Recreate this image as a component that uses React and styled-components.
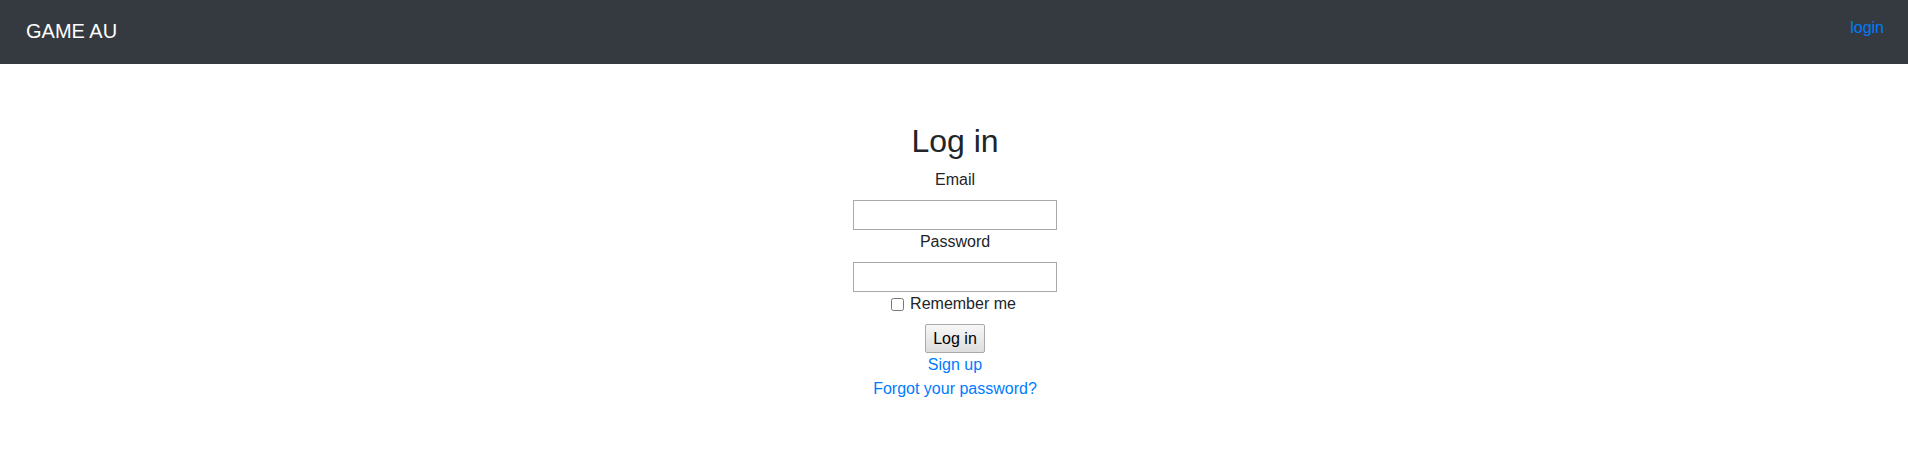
import React from "react";
import styled, { createGlobalStyle } from "styled-components";

const GlobalStyle = createGlobalStyle`
  body {
    margin: 0;
    font-family: "Liberation Sans", Arial, sans-serif;
    font-size: 16px;
    line-height: 24px;
    color: #212529;
    background: #fff;
  }
`;

const Navbar = styled.nav`
  display: flex;
  justify-content: space-between;
  align-items: flex-start;
  height: 64px;
  padding: 0 24px 0 26px;
  background-color: #343a40;
`;

const Brand = styled.a`
  margin-top: 16px;
  font-size: 20px;
  line-height: 30px;
  color: #fff;
  text-decoration: none;
`;

const NavLink = styled.a`
  margin-top: 16px;
  color: #007bff;
  text-decoration: none;
`;

const Main = styled.main`
  padding: 58px 0 0 2px;
  text-align: center;
`;

const Title = styled.h2`
  margin: 0 0 8px;
  font-size: 32px;
  font-weight: 500;
  line-height: 1.2;
`;

const Field = styled.div``;

const Label = styled.label`
  display: block;
  margin: ${(p) => (p.$inline ? "0 3px 0 0" : "0 0 8px")};
`;

const TextInput = styled.input`
  display: block;
  box-sizing: border-box;
  width: 204px;
  height: 30px;
  margin: 0 auto;
  padding: 1px 2px;
  border: 1px solid #a9a9a9;
  font: inherit;
`;

const CheckRow = styled.div`
  display: flex;
  justify-content: center;
  align-items: center;
  height: 24px;
  margin-bottom: 8px;
`;

const Check = styled.input`
  width: 13px;
  height: 13px;
  margin: 0 6px 0 0;
`;

const Actions = styled.div`
  display: flex;
  justify-content: center;
`;

const Submit = styled.button`
  height: 29px;
  padding: 0 7px;
  border: 1px solid #a9a9a9;
  border-radius: 2px;
  background: linear-gradient(#f7f7f7, #dddddd);
  color: #000;
  font: inherit;
`;

const Links = styled.div`
  display: flex;
  flex-direction: column;
  align-items: center;
`;

const Link = styled.a`
  color: #007bff;
  text-decoration: none;
`;

export default function App() {
  return (
    <>
      <GlobalStyle />
      <Navbar>
        <Brand href="#">GAME AU</Brand>
        <NavLink href="#">login</NavLink>
      </Navbar>
      <Main>
        <Title>Log in</Title>
        <form onSubmit={(e) => e.preventDefault()}>
          <Field>
            <Label htmlFor="user_email">Email</Label>
            <TextInput id="user_email" type="email" />
          </Field>
          <Field>
            <Label htmlFor="user_password">Password</Label>
            <TextInput id="user_password" type="password" />
          </Field>
          <CheckRow>
            <Check id="remember" type="checkbox" />
            <Label htmlFor="remember" $inline>
              Remember me
            </Label>
          </CheckRow>
          <Actions>
            <Submit type="submit">Log in</Submit>
          </Actions>
        </form>
        <Links>
          <Link href="#">Sign up</Link>
          <Link href="#">Forgot your password?</Link>
        </Links>
      </Main>
    </>
  );
}
